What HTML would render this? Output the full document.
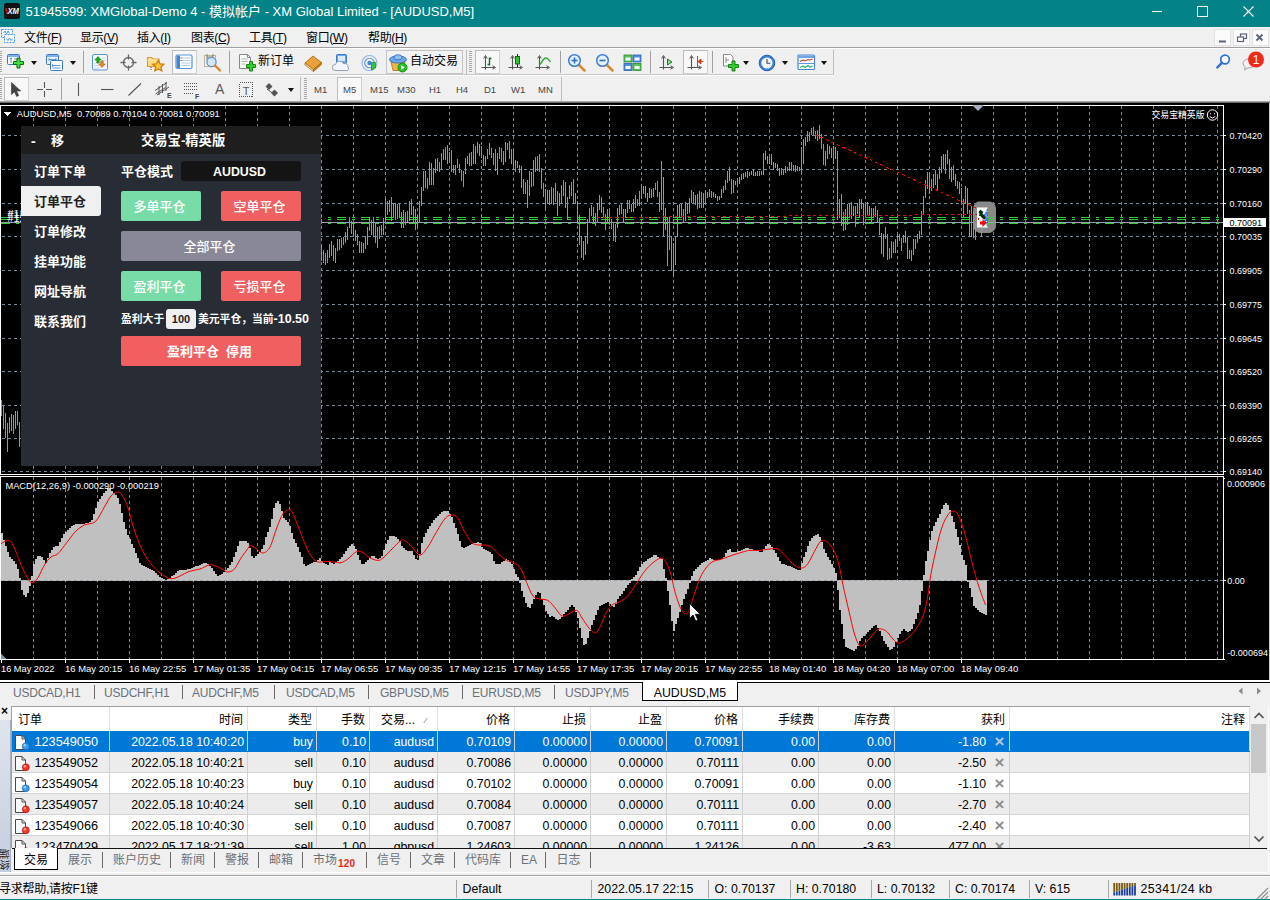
<!DOCTYPE html>
<html lang="zh"><head><meta charset="utf-8"><title>MT4</title>
<style>
html,body{margin:0;padding:0;background:#f0f0f0;overflow:hidden}
#app{position:relative;width:1270px;height:900px;overflow:hidden;background:#f0f0f0;font-family:"Liberation Sans","Noto Sans CJK SC",sans-serif;font-size:12px;color:#000}
#app *{box-sizing:border-box}
#title{position:absolute;left:0;top:0;width:1270px;height:27px;background:#038387}
.ttext{position:absolute;left:25.5px;top:3px;line-height:17px;font-size:13px;color:#fff;white-space:pre}
#menu{position:absolute;left:0;top:0;width:1270px;height:0}
.mi{position:absolute;top:29px;line-height:18px;font-size:12px;white-space:nowrap;letter-spacing:-.35px}
.mi u{text-decoration:underline;text-underline-offset:1px}
.mdib{position:absolute;top:29px;width:17px;height:17px;background:#fbfbfb;border:1px solid #e2e2e2}
.hl{position:absolute;left:0;width:1270px;height:1px}
#tb1,#tb2{position:absolute;left:0;top:0;width:1270px;height:0}
.grip{position:absolute;width:3px;height:21px;background:repeating-linear-gradient(to bottom,#a8a8a8 0 1px,transparent 1px 2px)}
.sep{position:absolute;width:1px;height:22px;background:#a0a0a0}
.dd{position:absolute;width:0;height:0;border-left:3.5px solid transparent;border-right:3.5px solid transparent;border-top:4px solid #111}
.pressed{position:absolute;background:#f8f8f8;border:1px solid #d0d0d0;border-top-color:#bdbdbd;border-left-color:#bdbdbd}
.atb{position:absolute;border:1px solid #c4c4c4;background:#f2f2f2}
.tbt{position:absolute;line-height:17px;font-size:12px;white-space:nowrap}
.per{position:absolute;font-size:9.5px;line-height:14px;color:#444;white-space:nowrap}
/* panel */
#panel{position:absolute;left:21px;top:126px;width:300px;height:340px;background:#282c34;color:#fff;font-weight:bold;font-size:13px}
.phead{position:absolute;left:0;top:0;width:300px;height:28px;background:#1e1e1e}
.phead span{position:absolute;line-height:17px;white-space:nowrap}
.pm{position:absolute;left:13px;line-height:20px;white-space:nowrap;font-size:13px}
.pm.on{color:#222}
.psel{position:absolute;left:0;width:80px;height:30px;background:#f0f0f0;border-radius:0 3px 3px 0}
.psym{position:absolute;text-indent:-3px;left:160px;top:35px;width:120px;height:20px;background:#141414;border-radius:3px;text-align:center;line-height:22px;font-size:12.4px}
.pb{position:absolute;text-indent:-3px;height:30px;border-radius:2px;text-align:center;line-height:31px;font-weight:500;font-size:13px;white-space:nowrap}
.pb.g{background:#78dca8}.pb.r{background:#f06060}.pb.v{background:#888898}
.ps{position:absolute;line-height:18px;font-size:10.8px;white-space:nowrap}
.ps b{font-size:12.5px}
.pin{position:absolute;left:145px;top:183px;width:30px;height:20px;background:#f0f0f0;border-radius:3px;color:#222;text-align:center;line-height:20px;font-size:11px}
/* chart tabs */
#ctabs{position:absolute;left:0;top:680px;width:1270px;height:27px;background:#f0f0f0;border-top:2px solid #fff}
#ctabs:before{content:"";position:absolute;left:0;top:0;width:1270px;height:1px;background:#000}
.ct{position:absolute;top:3px;line-height:17px;color:#6a7078;font-size:12px;white-space:nowrap;letter-spacing:-.22px}
.cs{position:absolute;top:3px;width:1px;height:14px;background:#6a6a6a}
.cact{position:absolute;left:642px;top:0;width:96px;height:19px;background:#fff;border:1px solid #000;border-top:none;text-align:center;line-height:23px;font-size:12.3px}
/* terminal */
#term{position:absolute;left:0;top:706px;width:1270px;height:169px;background:#f0f0f0}
#term:after{content:"";position:absolute;left:0;top:166px;width:1269px;height:1px;background:#fcfcfc}
#term:before{content:"";position:absolute;left:1268px;top:0;width:1px;height:167px;background:#fcfcfc}
.tstrip{position:absolute;left:0;top:14px;width:11px;height:152px;background:linear-gradient(#e0e4ee,#c4cde0);border-right:1px solid #a8b0c0}
.tx{position:absolute;left:1px;top:-16px;font-size:12px;font-weight:bold;line-height:14px}
.vt{position:absolute;left:0;top:124px;font-size:10.5px;line-height:11px;width:11px;height:26px;writing-mode:vertical-rl;transform:rotate(180deg);color:#222;letter-spacing:0}
#tbl{position:absolute;left:11px;top:0;width:1239px;height:142px;background:#fff;overflow:hidden;border-left:1px solid #a0a0a0;border-top:1px solid #a0a0a0}
.tr{position:absolute;left:0;width:1238px;height:21px;background:#fff;border-bottom:1px solid #d4d4d4}
.tr.th{top:0;height:24px;border-bottom:none}
.tr.alt{background:#ececec}
.tr.sel{background:#0078d7;color:#fff;border-bottom-color:#0078d7}
.c{position:absolute;top:0;height:100%;text-align:right;padding-right:3px;line-height:23px;font-size:12.3px;white-space:nowrap;border-right:1px solid #d0d0d0}
.th .c{line-height:26px;font-size:12px;border-right-color:#e0e0e0;padding-right:4px}
.di{position:absolute;left:2px;top:3px}
.cx{position:absolute;right:4.5px;top:-1px;color:#8c8c8c;font-size:17px;font-weight:bold}
.sel .cx{color:#b8c8d8}
.sb{position:absolute;left:1250px;top:1px;width:17px;height:141px;background:#f0f0f0}
.thumb{position:absolute;left:1px;top:17px;width:15px;height:49px;background:#c8c8c8}
.tline{position:absolute;left:12px;top:142px;width:1255px;height:1px;background:#111}
.btabs{position:absolute;left:0;top:142px;width:1270px;height:26px}
.bact{position:absolute;left:14px;top:0;width:44px;height:22px;background:#fff;border:1px solid #000;border-top:none;text-align:center;line-height:24px;font-size:12px}
.bt{position:absolute;top:4px;margin-left:1px;line-height:17px;color:#6a7078;font-size:12px;white-space:nowrap}
.bs{position:absolute;top:4px;width:1px;height:16px;background:#6a6a6a}
/* status */
#status{position:absolute;left:0;top:875px;width:1270px;height:25px;background:#f0f0f0;border-top:1px solid #a0a0a0;border-bottom:1px solid #038387}
#status:before{content:"";position:absolute;left:0;top:0;width:1270px;height:1px;background:#fff}
.st{position:absolute;top:5px;line-height:17px;font-size:12.3px;white-space:nowrap}
.ss{position:absolute;top:4px;width:1px;height:18px;background:#a8a8a8}

</style></head><body>
<div id="app">
<div id="title">
<svg style="position:absolute;left:4px;top:3px" width="16" height="16" viewBox="0 0 16 16" ><rect x="0" y="0" width="16" height="16" rx="2.5" fill="#111"/><path d="M1.8 5.2l1.6 5.6" stroke="#e01010" stroke-width="1.5"/><text x="9.2" y="11.2" font-family="Liberation Sans,sans-serif" font-size="8.6" font-weight="bold" font-style="italic" fill="#fff" text-anchor="middle" textLength="11.5" lengthAdjust="spacingAndGlyphs">XM</text></svg>
<span class="ttext">51945599: XMGlobal-Demo 4 - 模拟帐户 - XM Global Limited - [AUDUSD,M5]</span>
<svg style="position:absolute;left:1140px;top:0px" width="130" height="27" viewBox="0 0 130 27" ><g stroke="#fff" stroke-width="1" fill="none" shape-rendering="crispEdges"><path d="M12 11.5H22"/><rect x="57.5" y="6.5" width="10" height="10"/></g><path d="M103.5 6.5l10 10M113.5 6.5l-10 10" stroke="#fff" stroke-width="1.1"/></svg>
</div>
<div id="menu">
<svg style="position:absolute;left:1px;top:29px" width="15" height="14" viewBox="0 0 15 14" ><g fill="#fff" stroke="#3f97ee" stroke-width="1" stroke-dasharray="2 1"><rect x="0.500" y="0.500" width="11" height="8"/><rect x="3.500" y="5.500" width="10" height="8"/></g><path d="M2.500 4l1.500-2 1.500 3 1.500-3 1.500 2.500M5.500 9.500l1.500 2 1.500-2.500 1.500 2.500 1.500-2" fill="none" stroke="#3f8fe0" stroke-width=".9"/></svg>
<span class="mi" style="left:24px;width:37px">文件(<u>F</u>)</span>
<span class="mi" style="left:80px;width:39px">显示(<u>V</u>)</span>
<span class="mi" style="left:137px;width:37px">插入(<u>I</u>)</span>
<span class="mi" style="left:191px;width:41px">图表(<u>C</u>)</span>
<span class="mi" style="left:249px;width:40px">工具(<u>T</u>)</span>
<span class="mi" style="left:306px;width:45px">窗口(<u>W</u>)</span>
<span class="mi" style="left:368px;width:41px">帮助(<u>H</u>)</span>
<div class="mdib" style="left:1214px"></div>
<div class="mdib" style="left:1233px"></div>
<div class="mdib" style="left:1252px"></div>
<svg style="position:absolute;left:1214px;top:29px" width="56" height="17" viewBox="0 0 56 17" ><g stroke="#5a6478" fill="none"><path d="M5 12.5h7" stroke-width="2"/><g stroke-width="1.2"><rect x="26.5" y="5" width="6" height="4.5"/><rect x="23.5" y="8" width="6" height="4.5" fill="#fbfbfb"/></g><path d="M42.5 5.5l6 6M48.5 5.5l-6 6" stroke-width="1.9"/></g></svg>
</div>
<div class="hl" style="top:47px;background:#a0a0a0"></div><div class="hl" style="top:48px;background:#fff"></div>
<div id="tb1">
<div class="grip" style="left:-1px;top:51px"></div>
<svg style="position:absolute;left:6px;top:53px" width="20" height="19" viewBox="0 0 20 19" ><rect x="1.5" y="1.5" width="12" height="10" rx="1" fill="#fff" stroke="#3b78c4"/><rect x="2" y="2" width="11" height="2" fill="#7fb0e8"/><path d="M5 5v5M4 6l1-1 1 1M8 6h3M8 8.5h3" stroke="#3b78c4" stroke-width=".8" fill="none"/><path d="M7.5 8.5h3.5v-3.500h3v3.500h3.500v3h-3.500v3.500h-3v-3.500h-3.500z" fill="#3fe03f" stroke="#0a6a0a" stroke-width="1"/></svg>
<div class="dd" style="left:31px;top:61px"></div>
<svg style="position:absolute;left:45px;top:53px" width="20" height="19" viewBox="0 0 20 19" ><rect x="1.5" y="1.5" width="12" height="10" rx="1" fill="#eaf2fc" stroke="#3b78c4"/><rect x="2" y="2" width="11" height="2" fill="#7fb0e8"/><rect x="5.5" y="7.5" width="12" height="10" rx="1" fill="#fff" stroke="#3b78c4"/><path d="M4 6.5h7M7.5 12.5h8M7.5 15h8" stroke="#3b78c4" stroke-width=".8" fill="none"/><path d="M4 5v3M11 5v3M7.5 11v3" stroke="#3b78c4" stroke-width=".7"/></svg>
<div class="dd" style="left:70px;top:61px"></div>
<div class="sep" style="left:83px;top:51px"></div>
<svg style="position:absolute;left:91px;top:53px" width="19" height="19" viewBox="0 0 19 19" ><rect x="1.5" y="1.5" width="15" height="15.5" rx="1.5" fill="#f4f8fd" stroke="#5b93d6"/><path d="M3 10h4M3 12.5h5M3 15h6M11 5h4M11 7.500h4" stroke="#c5d3e4" stroke-width=".8"/><path d="M7 3.500l3.2 3.500h-2v3h-2.400v-3h-2z" fill="#17b317" stroke="#0c7a0c" stroke-width=".6"/><path d="M11 14.500l-3.2-3.500h2v-3h2.400v3h2z" fill="#e8892a" stroke="#a85a10" stroke-width=".6"/></svg>
<svg style="position:absolute;left:120px;top:54px" width="18" height="18" viewBox="0 0 18 18" ><g fill="none" stroke="#666" stroke-width="1.3"><circle cx="8.5" cy="8.5" r="5"/><path d="M8.5 0.500v5M8.5 11.500v5M0.5 8.500h5M11.5 8.500h5"/></g></svg>
<svg style="position:absolute;left:146px;top:53px" width="20" height="20" viewBox="0 0 20 20" ><path d="M1.5 4.500h4l1.5 1.500h6v7.500h-11.500z" fill="#fbdc80" stroke="#e0962a" stroke-width="1.1"/><path d="M1.5 7h11.5" stroke="#fbe9b6"/><path d="M12.3 7.200l1.7 3.6 3.9.5-2.9 2.7.8 3.9-3.5-2-3.5 2 .8-3.9-2.9-2.7 3.9-.5z" fill="#fac63c" stroke="#c87a0c" stroke-width="1.2"/><path d="M5 14v4" stroke="#555" stroke-dasharray="1 1"/></svg>
<div class="pressed" style="left:172px;top:50px;width:25px;height:24px"></div>
<svg style="position:absolute;left:175px;top:54px" width="19" height="16" viewBox="0 0 19 16" ><rect x="1" y="1" width="16" height="13.5" rx="1.5" fill="#fff" stroke="#5b93d6" stroke-width="1.2"/><rect x="1.6" y="1.6" width="3.4" height="12.3" fill="#3f86d8"/><path d="M6.5 4h9M6.5 6.500h9M6.5 9h9M6.5 11.500h9" stroke="#9cc0ea" stroke-width=".8"/><path d="M5.5 4h1.500M5.5 6.500h1.5" stroke="#e03030" stroke-width=".9"/></svg>
<svg style="position:absolute;left:203px;top:53px" width="20" height="20" viewBox="0 0 20 20" ><rect x="1.5" y="2.5" width="11" height="11" fill="#f6f1e6" stroke="#b9ad96" stroke-width=".9"/><path d="M4 1v6M10 1v6M4 4h6" stroke="#7a7466" stroke-width=".9" fill="none"/><circle cx="8.5" cy="9" r="4.6" fill="#cfe4fb" fill-opacity=".85" stroke="#5b93d6" stroke-width="1.3"/><path d="M12 12.500l5 5" stroke="#d98a2b" stroke-width="2.4" stroke-linecap="round"/></svg>
<div class="sep" style="left:229px;top:51px"></div>
<svg style="position:absolute;left:237px;top:53px" width="21" height="20" viewBox="0 0 21 20" ><path d="M2.5 1.500h8l3 3v11h-11z" fill="#fff" stroke="#7a7a7a" stroke-width=".9"/><path d="M10.5 1.500v3h3" fill="none" stroke="#7a7a7a" stroke-width=".9"/><path d="M4.5 6h6M4.5 8.500h6M4.5 11h4" stroke="#9a9a9a" stroke-width=".8"/><path d="M9.5 11.500h3v-3h3v3h3v3h-3v3.500h-3v-3.500h-3z" fill="#2fd02f" stroke="#0a7a0a" stroke-width=".9"/></svg>
<span class="tbt" style="left:258px;top:53px">新订单</span>
<svg style="position:absolute;left:303px;top:54px" width="21" height="18" viewBox="0 0 21 18" ><path d="M2 9l8-7 8.5 6.5-8 7z" fill="#e9a23b" stroke="#a86a12" stroke-width=".9"/><path d="M2 9l8.5 6.500v2l-8.5-6.500z" fill="#f7e2b8" stroke="#a86a12" stroke-width=".8"/><path d="M10.5 15.500l8-7v2l-8 7z" fill="#c9801e" stroke="#a86a12" stroke-width=".8"/></svg>
<svg style="position:absolute;left:332px;top:53px" width="20" height="20" viewBox="0 0 20 20" ><rect x="4.5" y="1.5" width="10" height="9" rx="1" fill="#6aa5e6" stroke="#2f6fbe" stroke-width=".9"/><rect x="6" y="3" width="7" height="5" fill="#d8e9fb"/><path d="M3 17.500a3 3 0 0 1 .5-6 4.2 4.2 0 0 1 8-.8 3.3 3.3 0 0 1 4.5 3.3 2.5 2.5 0 0 1-.5 3.500z" fill="#f3f6fa" stroke="#8a96a8" stroke-width=".9"/></svg>
<svg style="position:absolute;left:360px;top:53px" width="20" height="20" viewBox="0 0 20 20" ><g fill="none" stroke="#5b93d6"><circle cx="9.5" cy="10" r="7.5" stroke-width="1.1" stroke="#8db4e4"/><circle cx="9.5" cy="10" r="4.8" stroke-width="1.1"/><circle cx="9.5" cy="10" r="2.2" fill="#3f86d8" stroke="none"/></g><path d="M11.5 9.500v7.500l4-2.200v-5.300z" fill="#3cc23c" stroke="#168a16" stroke-width=".7"/></svg>
<div class="atb" style="left:386px;top:50px;width:77px;height:24px"></div>
<svg style="position:absolute;left:388px;top:53px" width="22" height="20" viewBox="0 0 22 20" ><path d="M3 8.500h14l-2 9h-10z" fill="#f0b44c" stroke="#b87a14" stroke-width=".9"/><ellipse cx="10" cy="6.5" rx="8.5" ry="3.6" fill="#6aa5e6" stroke="#2f6fbe" stroke-width=".9"/><ellipse cx="10" cy="4.3" rx="4" ry="2.6" fill="#8fc0f2" stroke="#2f6fbe" stroke-width=".8"/><circle cx="14.5" cy="14.5" r="4.5" fill="#25c225" stroke="#0d7c0d" stroke-width=".8"/><path d="M13.2 12.200v4.600l3.6-2.300z" fill="#fff"/></svg>
<span class="tbt" style="left:410px;top:53px">自动交易</span>
<div style="position:absolute;left:466px;top:50px;width:1px;height:24px;background:#bdbdbd"></div>
<div class="grip" style="left:469px;top:51px"></div>
<div class="pressed" style="left:475px;top:50px;width:25px;height:24px"></div>
<svg style="position:absolute;left:478px;top:53px" width="20" height="20" viewBox="0 0 20 20" ><path d="M7.5 3.5v13M3.5 14.5h13" fill="none" stroke="#555" stroke-width="1.1"/><path d="M5.7 5.5l1.8-3 1.8 3M14.5 12.7l3 1.8-3 1.8" fill="none" stroke="#555" stroke-width="1"/><path d="M11.5 4.5v8M9.5 11.500h2M11.500 5.500h2" stroke="#1a6a2a" stroke-width="1.400" fill="none"/></svg>
<svg style="position:absolute;left:505px;top:53px" width="20" height="20" viewBox="0 0 20 20" ><path d="M7.5 3.5v13M3.5 14.5h13" fill="none" stroke="#555" stroke-width="1.1"/><path d="M5.7 5.5l1.8-3 1.8 3M14.5 12.7l3 1.8-3 1.8" fill="none" stroke="#555" stroke-width="1"/><path d="M12.500 1v13" stroke="#222"/><rect x="10.500" y="3.500" width="4" height="7.500" fill="#2fc52f" stroke="#0d5a0d" stroke-width=".9"/></svg>
<svg style="position:absolute;left:532px;top:53px" width="20" height="20" viewBox="0 0 20 20" ><path d="M7.5 3.5v13M3.5 14.5h13" fill="none" stroke="#555" stroke-width="1.1"/><path d="M5.7 5.5l1.8-3 1.8 3M14.5 12.7l3 1.8-3 1.8" fill="none" stroke="#555" stroke-width="1"/><path d="M8 11.500c2-3 3.500-6 5.500-6.500s3 2 5 4" fill="none" stroke="#2aa52a" stroke-width="1.300"/></svg>
<div class="sep" style="left:560px;top:51px"></div>
<svg style="position:absolute;left:567px;top:53px" width="20" height="20" viewBox="0 0 20 20" ><path d="M11.5 11.500l6 6" stroke="#d98a2b" stroke-width="2.6" stroke-linecap="round"/><circle cx="7.5" cy="7.5" r="5.8" fill="#e4f0fc" stroke="#3f7fd0" stroke-width="1.5"/><g stroke="#2f6fbe" stroke-width="1.6"><path d="M4.5 7.500h6"/><path d="M7.5 4.500v6"/></g></svg>
<svg style="position:absolute;left:595px;top:53px" width="20" height="20" viewBox="0 0 20 20" ><path d="M11.5 11.500l6 6" stroke="#d98a2b" stroke-width="2.6" stroke-linecap="round"/><circle cx="7.5" cy="7.5" r="5.8" fill="#e4f0fc" stroke="#3f7fd0" stroke-width="1.5"/><g stroke="#2f6fbe" stroke-width="1.6"><path d="M4.5 7.500h6"/></g></svg>
<svg style="position:absolute;left:623px;top:54px" width="20" height="18" viewBox="0 0 20 18" ><g stroke-width=".8"><rect x="1" y="1" width="8" height="7" fill="#58c558" stroke="#2a8a2a"/><rect x="10" y="1" width="8" height="7" fill="#4f90e0" stroke="#2a5fae"/><rect x="1" y="9.5" width="8" height="7" fill="#4f90e0" stroke="#2a5fae"/><rect x="10" y="9.5" width="8" height="7" fill="#58c558" stroke="#2a8a2a"/></g><g fill="#fff"><rect x="2.5" y="3.5" width="5" height="3"/><rect x="11.5" y="3.5" width="5" height="3"/><rect x="2.5" y="12" width="5" height="3"/><rect x="11.5" y="12" width="5" height="3"/></g></svg>
<div class="sep" style="left:650px;top:51px"></div>
<svg style="position:absolute;left:656px;top:53px" width="20" height="20" viewBox="0 0 20 20" ><path d="M7.5 3.5v13M3.5 14.5h13" fill="none" stroke="#555" stroke-width="1.1"/><path d="M5.7 5.5l1.8-3 1.8 3M14.5 12.7l3 1.8-3 1.8" fill="none" stroke="#555" stroke-width="1"/><path d="M11.500 6v6l4.500-3z" fill="#8fe08f" stroke="#0d6a0d" stroke-width=".9"/></svg>
<div class="pressed" style="left:683px;top:50px;width:25px;height:24px"></div>
<svg style="position:absolute;left:684px;top:53px" width="22" height="20" viewBox="0 0 22 20" ><path d="M7.5 3.5v13M3.5 14.5h13" fill="none" stroke="#555" stroke-width="1.1"/><path d="M5.7 5.5l1.8-3 1.8 3M14.5 12.7l3 1.8-3 1.8" fill="none" stroke="#555" stroke-width="1"/><path d="M13.500 3v11" stroke="#3a6aa8"/><path d="M19.500 8.500h-5M17 6l-3 2.500 3 2.500z" stroke="#d03a1a" fill="#d03a1a" stroke-width=".9"/></svg>
<div class="sep" style="left:712px;top:51px"></div>
<svg style="position:absolute;left:721px;top:53px" width="22" height="20" viewBox="0 0 22 20" ><path d="M2.5 1.500h7l2.5 2.500v9h-9.500z" fill="#fff" stroke="#7a7a7a" stroke-width=".9"/><path d="M5 4v6M5 7h3" stroke="#7a7a7a" stroke-width=".9"/><path d="M7.5 11.500h3.500v-3.500h3v3.500h3.500v3h-3.500v3.500h-3v-3.500h-3.500z" fill="#2fd02f" stroke="#0a7a0a" stroke-width=".9"/></svg>
<div class="dd" style="left:743px;top:61px"></div>
<svg style="position:absolute;left:757px;top:53px" width="20" height="20" viewBox="0 0 20 20" ><circle cx="10" cy="10" r="7.8" fill="#3f7fd8" stroke="#1f55a8" stroke-width=".9"/><circle cx="10" cy="10" r="5.6" fill="#f4f7fb"/><path d="M10 6v4.300h3.2" fill="none" stroke="#444" stroke-width="1.1"/></svg>
<div class="dd" style="left:782px;top:61px"></div>
<svg style="position:absolute;left:797px;top:54px" width="20" height="18" viewBox="0 0 20 18" ><rect x="1" y="1" width="16.5" height="14.5" rx="1" fill="#fff" stroke="#4a88d6" stroke-width="1.2"/><rect x="1.5" y="1.5" width="15.5" height="2.5" fill="#6aa5e6"/><path d="M1.5 9.500h15.5" stroke="#4a88d6" stroke-width=".9"/><path d="M3 7.500l3-1.5 2 1 3-1.5 2 .5 2.5-1" fill="none" stroke="#c0392b" stroke-width="1.1"/><path d="M3 13.500l3-1.5 2 1.5 3-2 2 1.5 2.5-1" fill="none" stroke="#27ae60" stroke-width="1.1"/></svg>
<div class="dd" style="left:821px;top:61px"></div>
<div style="position:absolute;left:833px;top:50px;width:1px;height:24px;background:#bdbdbd"></div>
<div style="position:absolute;left:469px;top:74px;width:365px;height:1px;background:#c0c0c0"></div>
<svg style="position:absolute;left:1214px;top:53px" width="20" height="18" viewBox="0 0 20 18" ><circle cx="11" cy="6.5" r="4.3" fill="#fff" stroke="#2f6fd0" stroke-width="1.7"/><path d="M7.8 9.800l-4.5 4.7" stroke="#2f6fd0" stroke-width="2.4" stroke-linecap="round"/></svg>
<svg style="position:absolute;left:1240px;top:50px" width="30" height="24" viewBox="0 0 30 24" ><path d="M3 13.500a6 4.5 0 1 1 5 4.300l-3.5 2.2.8-3a6 4.5 0 0 1-2.3-3.500z" fill="#f2f2f2" stroke="#9a9a9a" stroke-width=".9"/><circle cx="16" cy="9.5" r="8" fill="#ee2a1c"/><text x="16" y="13.8" font-family="Liberation Sans,sans-serif" font-size="12" fill="#fff" text-anchor="middle">1</text></svg>
</div>
<div class="hl" style="top:74px;background:#c8c8c8;width:834px"></div><div class="hl" style="top:75px;background:#fff;width:834px"></div>
<div id="tb2">
<div class="grip" style="left:-1px;top:78px"></div>
<div class="pressed" style="left:4px;top:77px;width:25px;height:24px"></div>
<svg style="position:absolute;left:9px;top:81px" width="14" height="17" viewBox="0 0 14 17" ><path d="M2.5 1.500v12l3-2.8 2.2 4.8 2-1-2.2-4.600h4.200z" fill="#444" stroke="#333" stroke-width=".6"/></svg>
<svg style="position:absolute;left:36px;top:81px" width="18" height="18" viewBox="0 0 18 18" ><path d="M8.5 1v6M8.5 10v6M1 8.500h6M10 8.500h6" stroke="#555" stroke-width="1.1"/></svg>
<div class="sep" style="left:61px;top:78px"></div>
<svg style="position:absolute;left:72px;top:81px" width="14" height="18" viewBox="0 0 14 18" ><path d="M6.5 2v13" stroke="#555" stroke-width="1.1"/></svg>
<svg style="position:absolute;left:99px;top:81px" width="18" height="18" viewBox="0 0 18 18" ><path d="M2 8.500h12.5" stroke="#555" stroke-width="1.1"/></svg>
<svg style="position:absolute;left:126px;top:81px" width="18" height="18" viewBox="0 0 18 18" ><path d="M2.5 14.500l12.5-12" stroke="#555" stroke-width="1.1"/></svg>
<svg style="position:absolute;left:153px;top:80px" width="20" height="20" viewBox="0 0 20 20" ><g stroke="#555" stroke-width="1" fill="none"><path d="M2 10.500l12-8M4 15l12-8M2.5 14l10-6.5"/><path d="M6 6v9M9.5 4v9M13 2v9"/></g><text x="14" y="18" font-family="Liberation Sans,sans-serif" font-size="7" font-weight="bold" fill="#444">E</text></svg>
<svg style="position:absolute;left:182px;top:80px" width="20" height="20" viewBox="0 0 20 20" ><g stroke="#555" stroke-width="1" stroke-dasharray="1 1" fill="none"><path d="M2 3.500h13M2 6.500h13M2 9.500h13M2 13.500h10"/></g><text x="13" y="18.5" font-family="Liberation Sans,sans-serif" font-size="7" font-weight="bold" fill="#444">F</text></svg>
<span style="position:absolute;left:215px;top:80px;font:14px 'Liberation Sans',sans-serif;color:#5a5a5a;line-height:19px">A</span>
<svg style="position:absolute;left:238px;top:80px" width="18" height="20" viewBox="0 0 18 20" ><rect x="1.5" y="2.5" width="13" height="14" fill="none" stroke="#555" stroke-dasharray="1 1" shape-rendering="crispEdges"/><text x="8" y="14.5" font-family="Liberation Sans,sans-serif" font-size="11" fill="#5a5a5a" text-anchor="middle">T</text></svg>
<svg style="position:absolute;left:263px;top:80px" width="18" height="20" viewBox="0 0 18 20" ><path d="M2.5 6.500l3.5-3.5 3.5 3.5-3.5 3.500z" fill="#555"/><path d="M8 13l3.5-3.5 3.5 3.5-3.5 3.500z" fill="#555"/><path d="M4 9l8 6" stroke="#555"/></svg>
<div class="dd" style="left:288px;top:88px"></div>
<div style="position:absolute;left:300px;top:77px;width:1px;height:24px;background:#bdbdbd"></div>
<div class="grip" style="left:304px;top:78px"></div>
<div class="pressed" style="left:337px;top:77px;width:25px;height:24px"></div>
<span class="per" style="left:314px;top:83px">M1</span>
<span class="per" style="left:343px;top:83px">M5</span>
<span class="per" style="left:370px;top:83px">M15</span>
<span class="per" style="left:397px;top:83px">M30</span>
<span class="per" style="left:429px;top:83px">H1</span>
<span class="per" style="left:456px;top:83px">H4</span>
<span class="per" style="left:484px;top:83px">D1</span>
<span class="per" style="left:511px;top:83px">W1</span>
<span class="per" style="left:538px;top:83px">MN</span>
<div style="position:absolute;left:561px;top:77px;width:1px;height:24px;background:#bdbdbd"></div>
<div style="position:absolute;left:303px;top:101px;width:259px;height:1px;background:#c0c0c0"></div>
</div>
<div class="hl" style="top:101px;background:#a9a9a9"></div><div class="hl" style="top:102px;background:#696969"></div>
<svg id="chart" width="1270" height="577" viewBox="0 103 1270 577" shape-rendering="crispEdges" style="position:absolute;left:0;top:103px">
<rect x="0" y="103" width="1270" height="577" fill="#000"/>
<rect x="1269" y="103" width="1" height="577" fill="#c8c8c8"/>
<g stroke="#778899" stroke-width="1" stroke-dasharray="3 3" fill="none">
<path d="M33.5 106V474"/>
<path d="M33.5 477V659"/>
<path d="M65.5 106V474"/>
<path d="M65.5 477V659"/>
<path d="M97.5 106V474"/>
<path d="M97.5 477V659"/>
<path d="M129.5 106V474"/>
<path d="M129.5 477V659"/>
<path d="M161.5 106V474"/>
<path d="M161.5 477V659"/>
<path d="M193.5 106V474"/>
<path d="M193.5 477V659"/>
<path d="M225.5 106V474"/>
<path d="M225.5 477V659"/>
<path d="M257.5 106V474"/>
<path d="M257.5 477V659"/>
<path d="M289.5 106V474"/>
<path d="M289.5 477V659"/>
<path d="M321.5 106V474"/>
<path d="M321.5 477V659"/>
<path d="M353.5 106V474"/>
<path d="M353.5 477V659"/>
<path d="M385.5 106V474"/>
<path d="M385.5 477V659"/>
<path d="M417.5 106V474"/>
<path d="M417.5 477V659"/>
<path d="M449.5 106V474"/>
<path d="M449.5 477V659"/>
<path d="M481.5 106V474"/>
<path d="M481.5 477V659"/>
<path d="M513.5 106V474"/>
<path d="M513.5 477V659"/>
<path d="M545.5 106V474"/>
<path d="M545.5 477V659"/>
<path d="M577.5 106V474"/>
<path d="M577.5 477V659"/>
<path d="M609.5 106V474"/>
<path d="M609.5 477V659"/>
<path d="M641.5 106V474"/>
<path d="M641.5 477V659"/>
<path d="M673.5 106V474"/>
<path d="M673.5 477V659"/>
<path d="M705.5 106V474"/>
<path d="M705.5 477V659"/>
<path d="M737.5 106V474"/>
<path d="M737.5 477V659"/>
<path d="M769.5 106V474"/>
<path d="M769.5 477V659"/>
<path d="M801.5 106V474"/>
<path d="M801.5 477V659"/>
<path d="M833.5 106V474"/>
<path d="M833.5 477V659"/>
<path d="M865.5 106V474"/>
<path d="M865.5 477V659"/>
<path d="M897.5 106V474"/>
<path d="M897.5 477V659"/>
<path d="M929.5 106V474"/>
<path d="M929.5 477V659"/>
<path d="M961.5 106V474"/>
<path d="M961.5 477V659"/>
<path d="M993.5 106V474"/>
<path d="M993.5 477V659"/>
<path d="M1025.5 106V474"/>
<path d="M1025.5 477V659"/>
<path d="M1057.5 106V474"/>
<path d="M1057.5 477V659"/>
<path d="M1089.5 106V474"/>
<path d="M1089.5 477V659"/>
<path d="M1121.5 106V474"/>
<path d="M1121.5 477V659"/>
<path d="M1153.5 106V474"/>
<path d="M1153.5 477V659"/>
<path d="M1185.5 106V474"/>
<path d="M1185.5 477V659"/>
<path d="M1217.5 106V474"/>
<path d="M1217.5 477V659"/>
<path d="M2 135.5H1223"/>
<path d="M2 169.5H1223"/>
<path d="M2 203.5H1223"/>
<path d="M2 236.5H1223"/>
<path d="M2 270.5H1223"/>
<path d="M2 304.5H1223"/>
<path d="M2 338.5H1223"/>
<path d="M2 371.5H1223"/>
<path d="M2 405.5H1223"/>
<path d="M2 438.5H1223"/>
<path d="M2 471.5H1223"/>
<path d="M2 580.5H1223"/>
</g>
<g stroke="#fff" stroke-width="1" fill="none">
<path d="M0.5 105V474.5H1223.5V105.5H0"/>
<path d="M0 105.5H1224"/>
<path d="M0.5 476V660M0 476.5H1224M1223.5 476V660M0 659.5H1225"/>
<path d="M1224 135.5H1226"/>
<path d="M1224 169.5H1226"/>
<path d="M1224 203.5H1226"/>
<path d="M1224 236.5H1226"/>
<path d="M1224 270.5H1226"/>
<path d="M1224 304.5H1226"/>
<path d="M1224 338.5H1226"/>
<path d="M1224 371.5H1226"/>
<path d="M1224 405.5H1226"/>
<path d="M1224 438.5H1226"/>
<path d="M1224 471.5H1226"/>
<path d="M1224 580.5H1226M1224 478.5H1225"/>
<path d="M1.5 660V663"/>
<path d="M65.5 660V663"/>
<path d="M129.5 660V663"/>
<path d="M193.5 660V663"/>
<path d="M257.5 660V663"/>
<path d="M321.5 660V663"/>
<path d="M385.5 660V663"/>
<path d="M449.5 660V663"/>
<path d="M513.5 660V663"/>
<path d="M577.5 660V663"/>
<path d="M641.5 660V663"/>
<path d="M705.5 660V663"/>
<path d="M769.5 660V663"/>
<path d="M833.5 660V663"/>
<path d="M897.5 660V663"/>
<path d="M961.5 660V663"/>
</g>
<g stroke="#32cd32" stroke-width="1" stroke-dasharray="9 6 3 6" fill="none">
<path d="M1 217.5H1223"/><path d="M1 219.5H1223"/><path d="M1 223.5H1223"/>
</g>
<path d="M1 222.5H1223" stroke="#98a0ac" stroke-width="1" fill="none"/>
<g shape-rendering="auto">
<path d="M978 201.500h12c4 1 6 4 6 8v16c0 4-3 7-7 7.500h-9c-4-.5-7-4-7-8v-14c0-5 2-8.500 5-9.500z" fill="#8c8884"/>
<path d="M979 204h10c3 1 4.500 3 4.500 6v14c0 3-2 5-5 5.500h-8c-3-.5-5-3-5-6v-12c0-4 1.500-6.500 3.500-7.500z" fill="none" stroke="#7f8ea6" stroke-width="1"/>
</g>
<path d="M1.5 400V416M3.5 406V429M5.5 413V438M7.5 423V452M9.5 417V433M11.5 414V431M13.5 415V434M15.5 411V429M17.5 411V425M19.5 422V447M321.5 244V261M323.5 250V263M325.5 253V265M327.5 250V263M329.5 244V258M331.5 241V256M333.5 245V261M335.5 248V263M337.5 239V251M339.5 239V250M341.5 238V248M343.5 237V245M345.5 232V243M347.5 227V240M349.5 217V228M351.5 221V234M353.5 223V237M355.5 230V241M357.5 234V245M359.5 241V253M361.5 242V253M363.5 243V253M365.5 236V249M367.5 227V245M369.5 217V231M371.5 220V235M373.5 217V237M375.5 222V243M377.5 227V248M379.5 226V239M381.5 225V235M383.5 218V235M385.5 198V224M387.5 201V215M389.5 200V212M391.5 197V221M393.5 203V217M395.5 203V220M397.5 204V219M399.5 203V218M401.5 212V228M403.5 210V228M405.5 212V225M407.5 211V222M409.5 201V221M411.5 199V215M413.5 206V223M415.5 209V230M417.5 216V228M419.5 201V223M421.5 187V206M423.5 171V191M425.5 171V188M427.5 178V189M429.5 162V185M431.5 163V185M433.5 168V185M435.5 159V173M437.5 158V171M439.5 162V172M441.5 153V170M443.5 149V160M445.5 147V160M447.5 145V164M449.5 152V161M451.5 150V172M453.5 165V173M455.5 165V175M457.5 159V168M459.5 164V173M461.5 170V181M463.5 171V187M465.5 158V174M467.5 156V164M469.5 153V166M471.5 152V166M473.5 144V164M475.5 146V164M477.5 142V153M479.5 144V156M481.5 146V158M483.5 155V166M485.5 156V166M487.5 149V159M489.5 143V155M491.5 148V158M493.5 153V165M495.5 149V171M497.5 153V175M499.5 147V159M501.5 148V162M503.5 151V165M505.5 142V162M507.5 143V150M509.5 141V159M511.5 149V164M513.5 150V170M515.5 160V172M517.5 161V168M519.5 165V173M521.5 166V188M523.5 179V194M525.5 182V194M527.5 180V208M529.5 171V196M531.5 172V187M533.5 160V186M535.5 157V172M537.5 156V171M539.5 154V172M541.5 168V189M543.5 183V197M545.5 189V209M547.5 190V204M549.5 190V205M551.5 187V204M553.5 188V205M555.5 183V202M557.5 191V216M559.5 193V206M561.5 185V204M563.5 180V196M565.5 182V208M567.5 197V220M569.5 185V199M571.5 182V196M573.5 179V204M575.5 193V204M577.5 201V224M579.5 215V245M581.5 236V258M583.5 241V260M585.5 236V255M587.5 219V244M589.5 208V222M591.5 205V216M593.5 207V224M595.5 213V226M597.5 203V223M599.5 195V210M601.5 197V213M603.5 207V217M605.5 214V230M607.5 209V224M609.5 211V225M611.5 219V229M613.5 222V241M615.5 224V242M617.5 208V228M619.5 205V215M621.5 203V214M623.5 209V222M625.5 209V218M627.5 200V213M629.5 200V209M631.5 204V212M633.5 199V212M635.5 195V208M637.5 199V206M639.5 191V206M641.5 186V198M643.5 186V194M645.5 186V198M647.5 193V202M649.5 188V198M651.5 189V198M653.5 188V197M655.5 183V190M657.5 181V197M659.5 192V212M661.5 161V210M663.5 177V236M665.5 208V230M667.5 217V266M669.5 217V250M671.5 236V271M673.5 243V277M675.5 236V265M677.5 205V237M679.5 204V218M681.5 204V218M683.5 209V223M685.5 202V221M687.5 204V214M689.5 198V213M691.5 190V203M693.5 192V203M695.5 195V205M697.5 194V209M699.5 191V208M701.5 192V208M703.5 193V208M705.5 192V204M707.5 192V198M709.5 189V197M711.5 191V198M713.5 192V197M715.5 194V198M717.5 196V201M719.5 196V200M721.5 189V198M723.5 186V193M725.5 180V190M727.5 171V183M729.5 167V181M731.5 179V194M733.5 180V193M735.5 181V185M737.5 178V187M739.5 177V184M741.5 174V180M743.5 173V179M745.5 172V177M747.5 171V178M749.5 172V176M751.5 171V175M753.5 170V176M755.5 172V176M757.5 171V176M759.5 171V176M761.5 171V175M763.5 153V175M765.5 151V160M767.5 156V164M769.5 157V164M771.5 154V165M773.5 162V170M775.5 163V168M777.5 164V171M779.5 168V176M781.5 168V175M783.5 170V175M785.5 166V173M787.5 167V171M789.5 162V171M791.5 162V171M793.5 165V171M795.5 165V172M797.5 166V171M799.5 167V171M801.5 147V172M803.5 139V164M805.5 137V146M807.5 131V142M809.5 132V141M811.5 128V135M813.5 127V136M815.5 131V139M817.5 130V141M819.5 125V139M821.5 134V149M823.5 144V165M825.5 151V166M827.5 144V159M829.5 146V154M831.5 148V158M833.5 146V164M835.5 147V159M837.5 151V220M839.5 199V218M841.5 194V226M843.5 212V231M845.5 209V230M847.5 204V225M849.5 203V217M851.5 202V219M853.5 206V216M855.5 206V227M857.5 203V214M859.5 199V218M861.5 199V209M863.5 203V225M865.5 203V216M867.5 202V216M869.5 206V215M871.5 208V223M873.5 208V218M875.5 206V217M877.5 210V222M879.5 218V235M881.5 233V254M883.5 234V257M885.5 227V239M887.5 234V260M889.5 248V259M891.5 241V258M893.5 242V253M895.5 239V253M897.5 233V244M899.5 234V241M901.5 238V251M903.5 235V243M905.5 231V243M907.5 237V259M909.5 250V259M911.5 250V261M913.5 239V255M915.5 239V249M917.5 234V243M919.5 231V239M921.5 211V235M923.5 196V215M925.5 180V198M927.5 172V189M929.5 172V194M931.5 179V191M933.5 174V188M935.5 170V185M937.5 174V191M939.5 167V179M941.5 156V173M943.5 154V169M945.5 154V174M947.5 150V164M949.5 159V179M951.5 167V182M953.5 165V180M955.5 174V186M957.5 181V189M959.5 182V194M961.5 188V203M963.5 199V218M965.5 186V204M967.5 188V214M969.5 210V237M971.5 206V237M973.5 212V238M975.5 224V240M977.5 210V228M981.5 227V237" stroke="#00ff00" stroke-width="1" fill="none"/>
<g stroke="#ff0000" stroke-width="1" stroke-dasharray="3 3" fill="none">
<path d="M597 217.5L978 214.5"/>
<path d="M815 134.5L978 209"/>
</g>
<g shape-rendering="auto">
<rect x="977" y="207.500" width="11" height="20" fill="#fff"/>
<path d="M988 207.500L982.500 217L988 227.500Z" fill="#2f7fe0"/>
<path d="M984.500 212.500h1v1h-1zM985.500 214.500h1v1h-1zM986.500 211h1v1h-1zM986.500 216.500h1v1h-1zM984.500 219h1v1h-1zM986 221h1v1h-1zM986.500 223.500h1v1h-1z" fill="#fff"/>
<path d="M978.500 212l2-2.500 1.500 1.500 1.500 1-1 1.500 2 2 1 2.500-1 1.500-2.500-1.500-1.500-2h-1.500l.5-2z" fill="#0a2a0a"/>
<path d="M980 221.500h2.500v-2.500l4 4-4 4v-2.500h-2.500z" fill="#ff0000"/>
<rect x="978" y="218" width="1" height="2" fill="#ff2020"/>
</g>
<path d="M988 217.500H994M988 219.500H994M988 223.500H994" stroke="#32cd32" stroke-width="1" fill="none"/>
<path d="M988 222.500H996" stroke="#98a0ac" stroke-width="1" fill="none"/>
<path d="M1 533H3V581H1ZM3 540H5V581H3ZM5 546H7V581H5ZM7 552H9V581H7ZM9 557H11V581H9ZM11 559H13V581H11ZM13 561H15V581H13ZM15 564H17V581H15ZM17 569H19V581H17ZM19 578H21V581H19ZM21 580H23V590H21ZM23 580H25V595H23ZM25 580H27V597H25ZM27 580H29V593H27ZM29 580H31V586H29ZM31 576H33V581H31ZM33 564H35V581H33ZM35 559H37V581H35ZM37 556H39V581H37ZM39 556H41V581H39ZM41 557H43V581H41ZM43 560H45V581H43ZM45 563H47V581H45ZM47 558H49V581H47ZM49 553H51V581H49ZM51 550H53V581H51ZM53 547H55V581H53ZM55 546H57V581H55ZM57 546H59V581H57ZM59 542H61V581H59ZM61 538H63V581H61ZM63 534H65V581H63ZM65 532H67V581H65ZM67 530H69V581H67ZM69 528H71V581H69ZM71 526H73V581H71ZM73 525H75V581H73ZM75 524H77V581H75ZM77 524H79V581H77ZM79 524H81V581H79ZM81 524H83V581H81ZM83 524H85V581H83ZM85 523H87V581H85ZM87 523H89V581H87ZM89 522H91V581H89ZM91 520H93V581H91ZM93 514H95V581H93ZM95 508H97V581H95ZM97 502H99V581H97ZM99 499H101V581H99ZM101 496H103V581H101ZM103 493H105V581H103ZM105 491H107V581H105ZM107 488H109V581H107ZM109 488H111V581H109ZM111 491H113V581H111ZM113 493H115V581H113ZM115 495H117V581H115ZM117 498H119V581H117ZM119 504H121V581H119ZM121 513H123V581H121ZM123 522H125V581H123ZM125 529H127V581H125ZM127 535H129V581H127ZM129 539H131V581H129ZM131 544H133V581H131ZM133 548H135V581H133ZM135 553H137V581H135ZM137 558H139V581H137ZM139 563H141V581H139ZM141 565H143V581H141ZM143 566H145V581H143ZM145 567H147V581H145ZM147 568H149V581H147ZM149 569H151V581H149ZM151 570H153V581H151ZM153 571H155V581H153ZM155 573H157V581H155ZM157 575H159V581H157ZM159 577H161V581H159ZM161 578H163V581H161ZM163 579H165V581H163ZM165 580H167V581H165ZM167 579H169V581H167ZM169 578H171V581H169ZM171 576H173V581H171ZM173 575H175V581H173ZM175 573H177V581H175ZM177 571H179V581H177ZM179 570H181V581H179ZM181 570H183V581H181ZM183 570H185V581H183ZM185 570H187V581H185ZM187 569H189V581H187ZM189 569H191V581H189ZM191 568H193V581H191ZM193 567H195V581H193ZM195 566H197V581H195ZM197 566H199V581H197ZM199 565H201V581H199ZM201 564H203V581H201ZM203 563H205V581H203ZM205 563H207V581H205ZM207 564H209V581H207ZM209 566H211V581H209ZM211 568H213V581H211ZM213 571H215V581H213ZM215 574H217V581H215ZM217 576H219V581H217ZM219 575H221V581H219ZM221 574H223V581H221ZM223 572H225V581H223ZM225 570H227V581H225ZM227 568H229V581H227ZM229 565H231V581H229ZM231 562H233V581H231ZM233 557H235V581H233ZM235 552H237V581H235ZM237 546H239V581H237ZM239 541H241V581H239ZM241 541H243V581H241ZM243 541H245V581H243ZM245 541H247V581H245ZM247 543H249V581H247ZM249 548H251V581H249ZM251 556H253V581H251ZM253 558H255V581H253ZM255 556H257V581H255ZM257 554H259V581H257ZM259 552H261V581H259ZM261 549H263V581H261ZM263 545H265V581H263ZM265 537H267V581H265ZM267 532H269V581H267ZM269 527H271V581H269ZM271 519H273V581H271ZM273 508H275V581H273ZM275 503H277V581H275ZM277 501H279V581H277ZM279 504H281V581H279ZM281 511H283V581H281ZM283 518H285V581H283ZM285 520H287V581H285ZM287 522H289V581H287ZM289 526H291V581H289ZM291 533H293V581H291ZM293 539H295V581H293ZM295 543H297V581H295ZM297 547H299V581H297ZM299 552H301V581H299ZM301 557H303V581H301ZM303 564H305V581H303ZM305 566H307V581H305ZM307 565H309V581H307ZM309 564H311V581H309ZM311 563H313V581H311ZM313 562H315V581H313ZM315 562H317V581H315ZM317 560H319V581H317ZM319 558H321V581H319ZM321 561H323V581H321ZM323 563H325V581H323ZM325 564H327V581H325ZM327 565H329V581H327ZM329 562H331V581H329ZM331 563H333V581H331ZM333 564H335V581H333ZM335 562H337V581H335ZM337 561H339V581H337ZM339 559H341V581H339ZM341 557H343V581H341ZM343 554H345V581H343ZM345 551H347V581H345ZM347 548H349V581H347ZM349 546H351V581H349ZM351 544H353V581H351ZM353 546H355V581H353ZM355 549H357V581H355ZM357 555H359V581H357ZM359 560H361V581H359ZM361 564H363V581H361ZM363 564H365V581H363ZM365 562H367V581H365ZM367 560H369V581H367ZM369 558H371V581H369ZM371 556H373V581H371ZM373 556H375V581H373ZM375 558H377V581H375ZM377 559H379V581H377ZM379 558H381V581H379ZM381 556H383V581H381ZM383 550H385V581H383ZM385 544H387V581H385ZM387 540H389V581H387ZM389 536H391V581H389ZM391 536H393V581H391ZM393 536H395V581H393ZM395 537H397V581H395ZM397 539H399V581H397ZM399 541H401V581H399ZM401 546H403V581H401ZM403 548H405V581H403ZM405 550H407V581H405ZM407 551H409V581H407ZM409 551H411V581H409ZM411 551H413V581H411ZM413 555H415V581H413ZM415 559H417V581H415ZM417 560H419V581H417ZM419 554H421V581H419ZM421 543H423V581H421ZM423 537H425V581H423ZM425 533H427V581H425ZM427 529H429V581H427ZM429 526H431V581H429ZM431 523H433V581H431ZM433 520H435V581H433ZM435 518H437V581H435ZM437 516H439V581H437ZM439 514H441V581H439ZM441 512H443V581H441ZM443 511H445V581H443ZM445 511H447V581H445ZM447 511H449V581H447ZM449 514H451V581H449ZM451 517H453V581H451ZM453 523H455V581H453ZM455 528H457V581H455ZM457 534H459V581H457ZM459 541H461V581H459ZM461 547H463V581H461ZM463 548H465V581H463ZM465 547H467V581H465ZM467 546H469V581H467ZM469 545H471V581H469ZM471 544H473V581H471ZM473 543H475V581H473ZM475 543H477V581H475ZM477 542H479V581H477ZM479 543H481V581H479ZM481 547H483V581H481ZM483 549H485V581H483ZM485 550H487V581H485ZM487 551H489V581H487ZM489 552H491V581H489ZM491 554H493V581H491ZM493 561H495V581H493ZM495 564H497V581H495ZM497 564H499V581H497ZM499 564H501V581H499ZM501 562H503V581H501ZM503 561H505V581H503ZM505 559H507V581H505ZM507 560H509V581H507ZM509 562H511V581H509ZM511 564H513V581H511ZM513 569H515V581H513ZM515 574H517V581H515ZM517 577H519V581H517ZM519 580H521V583H519ZM521 580H523V591H521ZM523 580H525V597H523ZM525 580H527V603H525ZM527 580H529V607H527ZM529 580H531V608H529ZM531 580H533V604H531ZM533 580H535V599H533ZM535 580H537V595H535ZM537 580H539V592H537ZM539 580H541V593H539ZM541 580H543V599H541ZM543 580H545V605H543ZM545 580H547V611H545ZM547 580H549V614H547ZM549 580H551V617H549ZM551 580H553V616H551ZM553 580H555V617H553ZM555 580H557V619H555ZM557 580H559V620H557ZM559 580H561V619H559ZM561 580H563V617H561ZM563 580H565V614H563ZM565 580H567V612H565ZM567 580H569V610H567ZM569 580H571V607H569ZM571 580H573V605H571ZM573 580H575V607H573ZM575 580H577V612H575ZM577 580H579V618H577ZM579 580H581V628H579ZM581 580H583V638H581ZM583 580H585V645H583ZM585 580H587V644H585ZM587 580H589V638H587ZM589 580H591V631H589ZM591 580H593V625H591ZM593 580H595V620H593ZM595 580H597V615H595ZM597 580H599V610H597ZM599 580H601V606H599ZM601 580H603V605H601ZM603 580H605V604H603ZM605 580H607V603H605ZM607 580H609V602H607ZM609 580H611V604H609ZM611 580H613V606H611ZM613 580H615V607H613ZM615 580H617V604H615ZM617 580H619V599H617ZM619 580H621V596H619ZM621 580H623V594H621ZM623 580H625V591H623ZM625 580H627V588H625ZM627 580H629V585H627ZM629 580H631V583H629ZM631 579H633V581H631ZM633 577H635V581H633ZM635 575H637V581H635ZM637 571H639V581H637ZM639 567H641V581H639ZM641 564H643V581H641ZM643 562H645V581H643ZM645 561H647V581H645ZM647 559H649V581H647ZM649 558H651V581H649ZM651 557H653V581H651ZM653 555H655V581H653ZM655 555H657V581H655ZM657 557H659V581H657ZM659 558H661V581H659ZM661 559H663V581H661ZM663 569H665V581H663ZM665 578H667V581H665ZM667 580H669V591H667ZM669 580H671V605H669ZM671 580H673V621H671ZM673 580H675V631H673ZM675 580H677V624H675ZM677 580H679V618H677ZM679 580H681V612H679ZM681 580H683V605H681ZM683 580H685V599H683ZM685 580H687V594H685ZM687 580H689V589H687ZM689 580H691V583H689ZM691 576H693V581H691ZM693 571H695V581H693ZM695 569H697V581H695ZM697 567H699V581H697ZM699 565H701V581H699ZM701 563H703V581H701ZM703 562H705V581H703ZM705 561H707V581H705ZM707 560H709V581H707ZM709 558H711V581H709ZM711 559H713V581H711ZM713 560H715V581H713ZM715 560H717V581H715ZM717 560H719V581H717ZM719 560H721V581H719ZM721 559H723V581H721ZM723 557H725V581H723ZM725 553H727V581H725ZM727 550H729V581H727ZM729 549H731V581H729ZM731 552H733V581H731ZM733 552H735V581H733ZM735 552H737V581H735ZM737 551H739V581H737ZM739 551H741V581H739ZM741 550H743V581H741ZM743 549H745V581H743ZM745 548H747V581H745ZM747 548H749V581H747ZM749 549H751V581H749ZM751 549H753V581H751ZM753 550H755V581H753ZM755 551H757V581H755ZM757 551H759V581H757ZM759 552H761V581H759ZM761 552H763V581H761ZM763 549H765V581H763ZM765 546H767V581H765ZM767 544H769V581H767ZM769 545H771V581H769ZM771 547H773V581H771ZM773 550H775V581H773ZM775 553H777V581H775ZM777 557H779V581H777ZM779 561H781V581H779ZM781 564H783V581H781ZM783 564H785V581H783ZM785 565H787V581H785ZM787 566H789V581H787ZM789 566H791V581H789ZM791 567H793V581H791ZM793 568H795V581H793ZM795 569H797V581H795ZM797 570H799V581H797ZM799 570H801V581H799ZM801 563H803V581H801ZM803 557H805V581H803ZM805 552H807V581H805ZM807 546H809V581H807ZM809 541H811V581H809ZM811 538H813V581H811ZM813 536H815V581H813ZM815 535H817V581H815ZM817 534H819V581H817ZM819 537H821V581H819ZM821 542H823V581H821ZM823 549H825V581H823ZM825 553H827V581H825ZM827 557H829V581H827ZM829 560H831V581H829ZM831 564H833V581H831ZM833 568H835V581H833ZM835 573H837V581H835ZM837 580H839V590H837ZM839 580H841V610H839ZM841 580H843V624H841ZM843 580H845V639H843ZM845 580H847V647H845ZM847 580H849V648H847ZM849 580H851V649H849ZM851 580H853V650H851ZM853 580H855V651H853ZM855 580H857V649H855ZM857 580H859V646H857ZM859 580H861V641H859ZM861 580H863V638H861ZM863 580H865V636H863ZM865 580H867V634H865ZM867 580H869V632H867ZM869 580H871V630H869ZM871 580H873V628H871ZM873 580H875V626H873ZM875 580H877V625H875ZM877 580H879V628H877ZM879 580H881V631H879ZM881 580H883V636H881ZM883 580H885V641H883ZM885 580H887V644H885ZM887 580H889V647H887ZM889 580H891V650H889ZM891 580H893V649H891ZM893 580H895V647H893ZM895 580H897V642H895ZM897 580H899V638H897ZM899 580H901V634H899ZM901 580H903V631H901ZM903 580H905V629H903ZM905 580H907V631H905ZM907 580H909V632H907ZM909 580H911V631H909ZM911 580H913V629H911ZM913 580H915V624H913ZM915 580H917V619H915ZM917 580H919V613H917ZM919 580H921V605H919ZM921 580H923V591H921ZM923 575H925V581H923ZM925 561H927V581H925ZM927 551H929V581H927ZM929 540H931V581H929ZM931 531H933V581H931ZM933 526H935V581H933ZM935 522H937V581H935ZM937 518H939V581H937ZM939 514H941V581H939ZM941 509H943V581H941ZM943 505H945V581H943ZM945 503H947V581H945ZM947 505H949V581H947ZM949 510H951V581H949ZM951 516H953V581H951ZM953 522H955V581H953ZM955 529H957V581H955ZM957 537H959V581H957ZM959 545H961V581H959ZM961 555H963V581H961ZM963 560H965V581H963ZM965 565H967V581H965ZM967 580H969V582H967ZM969 580H971V588H969ZM971 580H973V597H971ZM973 580H975V606H973ZM975 580H977V608H975ZM977 580H979V610H977ZM979 580H981V612H979ZM981 580H983V613H981ZM983 580H985V614H983ZM985 580H987V615H985Z" fill="#c0c0c0"/>
<path d="M2 580.5H986" stroke="#9aa3ad" stroke-width="1" stroke-dasharray="3 3" fill="none"/>
<path d="M1.0 543.8C2.1 543.2 5.8 540.2 7.8 540.4C9.8 540.6 10.6 540.6 13.0 545.0C15.4 549.4 19.3 561.1 22.0 567.0C24.7 572.9 27.2 577.8 29.0 580.4C30.8 583.0 31.5 583.1 33.0 582.7C34.5 582.3 35.9 581.0 37.8 578.0C39.7 575.0 42.2 568.5 44.4 565.0C46.6 561.5 48.8 558.9 51.0 557.0C53.2 555.1 55.2 556.2 57.8 553.8C60.4 551.4 63.8 546.4 66.7 542.7C69.7 539.0 72.5 534.5 75.5 531.5C78.5 528.5 81.1 526.7 84.4 525.0C87.7 523.3 92.2 524.5 95.5 521.5C98.8 518.5 101.8 511.2 104.4 507.0C107.0 502.8 108.8 498.5 111.0 496.0C113.2 493.5 116.0 492.2 117.8 492.0C119.6 491.8 120.3 492.5 122.0 495.0C123.7 497.5 126.0 501.8 127.8 507.0C129.6 512.2 131.0 519.7 133.0 526.0C135.0 532.3 137.7 539.7 140.0 545.0C142.3 550.3 144.1 554.0 146.7 558.0C149.3 562.0 152.6 566.0 155.5 569.0C158.4 572.0 161.7 574.4 164.4 576.0C167.2 577.6 169.4 578.7 172.0 578.7C174.6 578.7 177.2 577.2 180.0 576.0C182.8 574.8 185.7 572.7 189.0 571.5C192.3 570.3 196.7 570.1 200.0 569.0C203.3 567.9 206.6 565.6 209.0 565.0C211.4 564.4 212.2 564.8 214.4 565.5C216.6 566.2 219.8 567.9 222.0 569.0C224.2 570.1 225.7 572.0 227.8 572.0C229.9 572.0 232.2 571.3 234.4 569.0C236.6 566.7 238.6 561.7 241.0 558.0C243.4 554.3 247.5 549.2 249.0 547.0C250.5 544.8 248.7 544.7 250.0 545.0C251.3 545.3 254.5 547.7 256.7 549.0C258.9 550.3 260.8 553.3 263.0 553.0C265.2 552.7 267.7 551.2 270.0 547.0C272.3 542.8 274.5 533.5 276.7 528.0C278.9 522.5 280.8 516.8 283.0 513.8C285.2 510.8 288.1 509.3 290.0 509.8C291.9 510.3 292.6 513.0 294.4 517.0C296.2 521.0 298.6 527.8 301.0 533.8C303.4 539.8 306.4 548.1 309.0 552.7C311.6 557.3 313.9 560.0 316.7 561.5C319.4 563.0 322.6 561.4 325.5 561.5C328.4 561.6 331.8 561.8 334.4 562.0C337.0 562.2 338.8 563.2 341.0 562.7C343.2 562.2 345.2 560.9 347.8 559.0C350.4 557.1 354.2 552.5 356.7 551.5C359.2 550.5 360.8 551.7 363.0 552.7C365.2 553.8 367.5 556.5 370.0 557.8C372.5 559.1 375.6 560.4 377.8 560.4C380.0 560.4 380.6 559.9 383.0 558.0C385.4 556.1 389.0 551.9 392.0 549.0C395.0 546.1 398.8 541.7 401.0 540.4C403.2 539.1 403.7 539.9 405.5 541.0C407.3 542.1 409.6 544.7 412.0 547.0C414.4 549.3 417.4 555.0 420.0 555.0C422.6 555.0 425.0 550.9 427.8 547.0C430.6 543.1 433.8 536.3 436.7 531.5C439.6 526.7 442.9 520.8 445.5 518.0C448.1 515.2 449.9 515.0 452.0 515.0C454.1 515.0 455.7 515.2 457.8 518.0C459.9 520.8 462.0 527.4 464.4 531.5C466.8 535.6 469.6 540.5 472.0 542.7C474.4 545.0 476.8 544.6 479.0 545.0C481.2 545.4 483.3 544.6 485.5 545.0C487.7 545.4 489.6 545.8 492.0 547.5C494.4 549.2 497.6 553.4 500.0 555.5C502.4 557.6 504.3 559.1 506.7 560.4C509.1 561.6 512.0 561.6 514.4 563.0C516.8 564.4 519.0 565.7 521.0 569.0C523.0 572.3 524.7 578.2 526.7 582.7C528.7 587.2 530.8 593.3 533.0 596.0C535.2 598.7 537.5 598.3 540.0 599.0C542.5 599.7 545.4 599.1 547.8 600.4C550.2 601.7 552.0 604.4 554.4 607.0C556.8 609.6 559.6 614.9 562.0 616.0C564.4 617.1 566.5 614.7 569.0 613.8C571.5 612.9 574.5 609.7 576.7 610.4C578.9 611.1 580.0 615.1 582.0 618.0C584.0 620.9 586.8 625.5 589.0 628.0C591.2 630.5 593.5 633.5 595.5 633.0C597.5 632.5 599.1 628.6 601.0 625.0C602.9 621.4 604.7 614.9 606.7 611.5C608.7 608.1 610.8 606.1 613.0 604.4C615.2 602.7 617.5 602.9 620.0 601.5C622.5 600.1 625.2 598.8 627.8 596.0C630.4 593.2 632.7 589.1 635.5 585.0C638.3 580.9 641.5 575.2 644.4 571.5C647.3 567.8 650.2 565.0 653.0 562.7C655.8 560.5 658.9 558.2 661.0 558.0C663.1 557.8 664.0 559.2 665.5 561.5C667.0 563.8 668.3 566.1 670.0 571.5C671.7 576.9 673.7 587.5 675.5 593.8C677.3 600.0 679.3 605.7 681.0 609.0C682.7 612.3 684.2 613.6 685.5 613.8C686.8 614.0 687.5 613.7 689.0 610.4C690.5 607.1 692.6 599.2 694.4 593.8C696.2 588.4 698.0 582.5 700.0 578.0C702.0 573.5 704.5 569.8 706.7 567.0C708.9 564.2 710.5 562.8 713.0 561.5C715.5 560.2 718.7 560.1 722.0 559.0C725.3 557.9 729.3 556.2 733.0 555.0C736.7 553.8 741.6 552.3 744.4 551.5C747.2 550.7 747.6 550.6 750.0 550.4C752.4 550.2 755.7 550.6 759.0 550.4C762.3 550.2 766.9 549.2 770.0 549.0C773.1 548.8 775.2 547.8 777.8 549.0C780.4 550.2 782.7 553.3 785.5 556.0C788.3 558.7 791.6 563.0 794.4 565.0C797.1 567.0 799.8 568.2 802.0 568.0C804.2 567.8 805.7 566.5 807.8 563.8C809.9 561.0 812.4 555.1 814.4 551.5C816.4 547.9 818.3 543.9 820.0 542.0C821.7 540.1 822.9 540.1 824.4 540.4C825.9 540.7 827.3 541.9 829.0 543.8C830.7 545.6 832.7 548.0 834.4 551.5C836.1 555.0 837.6 559.4 839.0 565.0C840.4 570.6 841.3 577.2 843.0 585.0C844.7 592.8 847.1 603.4 849.0 611.5C850.9 619.6 852.7 628.2 854.4 633.8C856.1 639.4 857.6 643.1 859.0 645.0C860.4 646.9 861.2 646.2 863.0 645.0C864.8 643.8 867.7 640.4 870.0 638.0C872.3 635.6 874.9 631.9 876.7 630.4C878.5 628.9 879.3 628.8 881.0 629.0C882.7 629.2 884.7 629.8 886.7 631.5C888.7 633.2 891.1 637.1 893.0 639.0C894.9 640.9 896.1 642.6 897.8 643.0C899.5 643.4 901.0 642.7 903.0 641.5C905.0 640.3 907.7 638.2 910.0 636.0C912.3 633.8 914.5 631.3 916.7 628.0C918.9 624.7 921.1 621.3 923.0 616.0C924.9 610.7 926.5 603.0 927.8 596.0C929.1 589.0 929.5 582.0 931.0 573.8C932.5 565.6 934.9 554.8 936.7 547.0C938.5 539.2 940.1 532.3 942.0 527.0C943.9 521.7 946.1 517.6 947.8 515.0C949.5 512.4 950.5 511.9 952.0 511.5C953.5 511.1 955.2 511.0 956.7 512.7C958.2 514.4 959.3 516.9 961.0 521.5C962.7 526.1 964.9 533.5 966.7 540.4C968.5 547.3 970.0 554.9 972.0 562.7C974.0 570.5 976.8 580.0 979.0 587.0C981.2 594.0 984.4 602.0 985.5 605.0" stroke="#ff0000" stroke-width="1" fill="none" shape-rendering="auto"/>
<g font-family="Liberation Sans, sans-serif" font-size="9" fill="#fff" shape-rendering="auto">
<text x="1229.5" y="138.9" font-size="9.4" textLength="32.5" lengthAdjust="spacingAndGlyphs">0.70420</text>
<text x="1229.5" y="172.9" font-size="9.4" textLength="32.5" lengthAdjust="spacingAndGlyphs">0.70290</text>
<text x="1229.5" y="206.9" font-size="9.4" textLength="32.5" lengthAdjust="spacingAndGlyphs">0.70160</text>
<text x="1229.5" y="239.9" font-size="9.4" textLength="32.5" lengthAdjust="spacingAndGlyphs">0.70035</text>
<text x="1229.5" y="273.9" font-size="9.4" textLength="32.5" lengthAdjust="spacingAndGlyphs">0.69905</text>
<text x="1229.5" y="307.9" font-size="9.4" textLength="32.5" lengthAdjust="spacingAndGlyphs">0.69775</text>
<text x="1229.5" y="341.9" font-size="9.4" textLength="32.5" lengthAdjust="spacingAndGlyphs">0.69645</text>
<text x="1229.5" y="374.9" font-size="9.4" textLength="32.5" lengthAdjust="spacingAndGlyphs">0.69520</text>
<text x="1229.5" y="408.9" font-size="9.4" textLength="32.5" lengthAdjust="spacingAndGlyphs">0.69390</text>
<text x="1229.5" y="441.9" font-size="9.4" textLength="32.5" lengthAdjust="spacingAndGlyphs">0.69265</text>
<text x="1229.5" y="474.9" font-size="9.4" textLength="32.5" lengthAdjust="spacingAndGlyphs">0.69140</text>
<text x="1227" y="487" font-size="9.4" textLength="38" lengthAdjust="spacingAndGlyphs">0.000906</text>
<text x="1227.3" y="584" font-size="9.4" textLength="17.4" lengthAdjust="spacingAndGlyphs">0.00</text>
<text x="1227.3" y="656" font-size="9.4" textLength="40.7" lengthAdjust="spacingAndGlyphs">-0.000694</text>
<rect x="1224" y="218" width="42" height="9" fill="#fff" shape-rendering="crispEdges"/>
<text x="1229.5" y="225.9" fill="#000" font-size="9.4" textLength="32.5" lengthAdjust="spacingAndGlyphs">0.70091</text>
<text x="1" y="672.2" font-size="9.6" textLength="53.4" lengthAdjust="spacingAndGlyphs">16 May 2022</text>
<text x="65" y="672.2" font-size="9.6" textLength="57.3" lengthAdjust="spacingAndGlyphs">16 May 20:15</text>
<text x="129" y="672.2" font-size="9.6" textLength="57.3" lengthAdjust="spacingAndGlyphs">16 May 22:55</text>
<text x="193" y="672.2" font-size="9.6" textLength="57.3" lengthAdjust="spacingAndGlyphs">17 May 01:35</text>
<text x="257" y="672.2" font-size="9.6" textLength="57.3" lengthAdjust="spacingAndGlyphs">17 May 04:15</text>
<text x="321" y="672.2" font-size="9.6" textLength="57.3" lengthAdjust="spacingAndGlyphs">17 May 06:55</text>
<text x="385" y="672.2" font-size="9.6" textLength="57.3" lengthAdjust="spacingAndGlyphs">17 May 09:35</text>
<text x="449" y="672.2" font-size="9.6" textLength="57.3" lengthAdjust="spacingAndGlyphs">17 May 12:15</text>
<text x="513" y="672.2" font-size="9.6" textLength="57.3" lengthAdjust="spacingAndGlyphs">17 May 14:55</text>
<text x="577" y="672.2" font-size="9.6" textLength="57.3" lengthAdjust="spacingAndGlyphs">17 May 17:35</text>
<text x="641" y="672.2" font-size="9.6" textLength="57.3" lengthAdjust="spacingAndGlyphs">17 May 20:15</text>
<text x="705" y="672.2" font-size="9.6" textLength="57.3" lengthAdjust="spacingAndGlyphs">17 May 22:55</text>
<text x="769" y="672.2" font-size="9.6" textLength="57.3" lengthAdjust="spacingAndGlyphs">18 May 01:40</text>
<text x="833" y="672.2" font-size="9.6" textLength="57.3" lengthAdjust="spacingAndGlyphs">18 May 04:20</text>
<text x="897" y="672.2" font-size="9.6" textLength="57.3" lengthAdjust="spacingAndGlyphs">18 May 07:00</text>
<text x="961" y="672.2" font-size="9.6" textLength="57.3" lengthAdjust="spacingAndGlyphs">18 May 09:40</text>
<text x="16.8" y="116.6" textLength="203" lengthAdjust="spacingAndGlyphs" xml:space="preserve">AUDUSD,M5  0.70089 0.70104 0.70081 0.70091</text>
<text x="5.4" y="489" textLength="153.5" lengthAdjust="spacingAndGlyphs">MACD(12,26,9) -0.000290 -0.000219</text>
<text x="7.5" y="215.5" font-size="9.5" textLength="18" lengthAdjust="spacingAndGlyphs">#12</text>
<text x="7.5" y="217.5" font-size="9.5" textLength="18" lengthAdjust="spacingAndGlyphs">#12</text>
<text x="7.5" y="221.5" font-size="9.5" textLength="18" lengthAdjust="spacingAndGlyphs">#12</text>
<text x="1151.5" y="118.3" font-size="9.5" font-family="Liberation Sans, Noto Sans CJK SC, sans-serif" textLength="53" lengthAdjust="spacingAndGlyphs">交易宝精英版</text>
</g>
<g shape-rendering="auto" fill="none" stroke="#fff" stroke-width="1"><circle cx="1212.5" cy="115" r="5.2"/><path d="M1209.8 116.5q2.7 3 5.4 0"/><path d="M1210.5 113.2v1M1214.5 113.2v1"/></g>
<path d="M4 112H11L7.500 116Z" fill="#fff" shape-rendering="crispEdges"/>
<path d="M972 105H984L978 111Z" fill="#a8b0c0" shape-rendering="auto"/>
<path d="M1 653.5L6.500 659H1Z" fill="#7f92b0" shape-rendering="auto"/>
<path d="M689.5 603.5v15l3.6-3.4 2.6 6 2.2-1-2.6-5.8h5z" fill="#fff" stroke="#000" stroke-width="0.8" shape-rendering="auto"/>
</svg>
<div id="panel">
<div class="phead"><span style="left:10px;top:7px;font-size:14px">-</span><span style="left:30px;top:6px">移</span><span style="left:120px;top:6px;font-size:13.3px">交易宝-精英版</span></div>
<span class="pm" style="top:36px">订单下单</span>
<div class="psel" style="top:60px"></div>
<span class="pm on" style="top:66px">订单平仓</span>
<span class="pm" style="top:96px">订单修改</span>
<span class="pm" style="top:126px">挂单功能</span>
<span class="pm" style="top:156px">网址导航</span>
<span class="pm" style="top:186px">联系我们</span>
<span class="pm" style="left:100px;top:36px">平仓模式</span>
<div class="psym">AUDUSD</div>
<div class="pb g" style="left:100px;top:65px;width:80px">多单平仓</div>
<div class="pb r" style="left:200px;top:65px;width:80px">空单平仓</div>
<div class="pb v" style="left:100px;top:105px;width:180px">全部平仓</div>
<div class="pb g" style="left:100px;top:145px;width:80px">盈利平仓</div>
<div class="pb r" style="left:200px;top:145px;width:80px">亏损平仓</div>
<span class="ps" style="left:100px;top:184px">盈利大于</span>
<div class="pin">100</div>
<span class="ps" style="left:177px;top:184px">美元平仓，当前<b>-10.50</b></span>
<div class="pb r" style="left:100px;top:210px;width:180px;font-weight:bold">盈利平仓&nbsp; 停用</div>
</div>
<div id="ctabs">
<span class="ct" style="left:13px">USDCAD,H1</span>
<span class="ct" style="left:104px">USDCHF,H1</span>
<span class="ct" style="left:192px">AUDCHF,M5</span>
<span class="ct" style="left:286px">USDCAD,M5</span>
<span class="ct" style="left:380px">GBPUSD,M5</span>
<span class="ct" style="left:472px">EURUSD,M5</span>
<span class="ct" style="left:565px">USDJPY,M5</span>
<i class="cs" style="left:94px"></i>
<i class="cs" style="left:182px"></i>
<i class="cs" style="left:274px"></i>
<i class="cs" style="left:368px"></i>
<i class="cs" style="left:462px"></i>
<i class="cs" style="left:554px"></i>
<div class="cact">AUDUSD,M5</div>
<svg style="position:absolute;left:1232px;top:3px" width="34" height="12" viewBox="0 0 34 12" ><path d="M6.500 6l4-3.500v7zM29 6l-4-3.500v7z" fill="#8a8a8a"/></svg>
</div>
<div id="term">
<div class="tstrip"><span class="tx">×</span><span class="vt">终端</span></div>
<div id="tbl">
<div class="tr th">
<span class="c" style="left:0px;width:98px;text-align:left;padding-left:6px">订单</span>
<span class="c" style="left:98px;width:138px">时间</span>
<span class="c" style="left:236px;width:69px">类型</span>
<span class="c" style="left:305px;width:53px">手数</span>
<span class="c" style="left:358px;width:68px;text-align:left;padding-left:11px">交易...<span style="position:absolute;left:55px;top:1px;font-size:8px;color:#555">⁄</span></span>
<span class="c" style="left:426px;width:77px">价格</span>
<span class="c" style="left:503px;width:76px">止损</span>
<span class="c" style="left:579px;width:76px">止盈</span>
<span class="c" style="left:655px;width:76px">价格</span>
<span class="c" style="left:731px;width:76px">手续费</span>
<span class="c" style="left:807px;width:76px">库存费</span>
<span class="c" style="left:883px;width:115px">获利</span>
<span class="c" style="left:998px;width:240px">注释</span>
</div>
<div class="tr sel" style="top:24px">
<span class="c" style="left:0px;width:98px;text-align:left;padding-left:22.5px;font-size:12.7px"><svg class="di" width="17" height="17" viewBox="0 0 17 17"><path d="M1.500 1.500h6.500l3.500 3.500v10.500h-10z" fill="#fff" stroke="#4a4a4a" stroke-width="1"/><path d="M8 1.500v3.500h3.500" fill="none" stroke="#4a4a4a" stroke-width="1"/><circle cx="11.800" cy="12.300" r="3.500" fill="#3a9cf0" stroke="#1a5fb4" stroke-width=".7"/><circle cx="10.800" cy="11.200" r="1.200" fill="#fff" fill-opacity=".55"/></svg>123549050</span>
<span class="c" style="left:98px;width:138px">2022.05.18 10:40:20</span>
<span class="c" style="left:236px;width:69px">buy</span>
<span class="c" style="left:305px;width:53px">0.10</span>
<span class="c" style="left:358px;width:68px">audusd</span>
<span class="c" style="left:426px;width:77px">0.70109</span>
<span class="c" style="left:503px;width:76px">0.00000</span>
<span class="c" style="left:579px;width:76px">0.00000</span>
<span class="c" style="left:655px;width:76px">0.70091</span>
<span class="c" style="left:731px;width:76px">0.00</span>
<span class="c" style="left:807px;width:76px">0.00</span>
<span class="c" style="left:883px;width:115px;padding-right:23px">-1.80<span class="cx">×</span></span>
<span class="c" style="left:998px;width:240px"></span>
</div>
<div class="tr alt" style="top:45px">
<span class="c" style="left:0px;width:98px;text-align:left;padding-left:22.5px;font-size:12.7px"><svg class="di" width="17" height="17" viewBox="0 0 17 17"><path d="M1.500 1.500h6.500l3.500 3.500v10.500h-10z" fill="#fff" stroke="#4a4a4a" stroke-width="1"/><path d="M8 1.500v3.500h3.500" fill="none" stroke="#4a4a4a" stroke-width="1"/><circle cx="11.800" cy="12.300" r="3.500" fill="#f03a2a" stroke="#b01010" stroke-width=".7"/><circle cx="10.800" cy="11.200" r="1.200" fill="#fff" fill-opacity=".55"/></svg>123549052</span>
<span class="c" style="left:98px;width:138px">2022.05.18 10:40:21</span>
<span class="c" style="left:236px;width:69px">sell</span>
<span class="c" style="left:305px;width:53px">0.10</span>
<span class="c" style="left:358px;width:68px">audusd</span>
<span class="c" style="left:426px;width:77px">0.70086</span>
<span class="c" style="left:503px;width:76px">0.00000</span>
<span class="c" style="left:579px;width:76px">0.00000</span>
<span class="c" style="left:655px;width:76px">0.70111</span>
<span class="c" style="left:731px;width:76px">0.00</span>
<span class="c" style="left:807px;width:76px">0.00</span>
<span class="c" style="left:883px;width:115px;padding-right:23px">-2.50<span class="cx">×</span></span>
<span class="c" style="left:998px;width:240px"></span>
</div>
<div class="tr" style="top:66px">
<span class="c" style="left:0px;width:98px;text-align:left;padding-left:22.5px;font-size:12.7px"><svg class="di" width="17" height="17" viewBox="0 0 17 17"><path d="M1.500 1.500h6.500l3.500 3.500v10.500h-10z" fill="#fff" stroke="#4a4a4a" stroke-width="1"/><path d="M8 1.500v3.500h3.500" fill="none" stroke="#4a4a4a" stroke-width="1"/><circle cx="11.800" cy="12.300" r="3.500" fill="#3a9cf0" stroke="#1a5fb4" stroke-width=".7"/><circle cx="10.800" cy="11.200" r="1.200" fill="#fff" fill-opacity=".55"/></svg>123549054</span>
<span class="c" style="left:98px;width:138px">2022.05.18 10:40:23</span>
<span class="c" style="left:236px;width:69px">buy</span>
<span class="c" style="left:305px;width:53px">0.10</span>
<span class="c" style="left:358px;width:68px">audusd</span>
<span class="c" style="left:426px;width:77px">0.70102</span>
<span class="c" style="left:503px;width:76px">0.00000</span>
<span class="c" style="left:579px;width:76px">0.00000</span>
<span class="c" style="left:655px;width:76px">0.70091</span>
<span class="c" style="left:731px;width:76px">0.00</span>
<span class="c" style="left:807px;width:76px">0.00</span>
<span class="c" style="left:883px;width:115px;padding-right:23px">-1.10<span class="cx">×</span></span>
<span class="c" style="left:998px;width:240px"></span>
</div>
<div class="tr alt" style="top:87px">
<span class="c" style="left:0px;width:98px;text-align:left;padding-left:22.5px;font-size:12.7px"><svg class="di" width="17" height="17" viewBox="0 0 17 17"><path d="M1.500 1.500h6.500l3.500 3.500v10.500h-10z" fill="#fff" stroke="#4a4a4a" stroke-width="1"/><path d="M8 1.500v3.500h3.500" fill="none" stroke="#4a4a4a" stroke-width="1"/><circle cx="11.800" cy="12.300" r="3.500" fill="#f03a2a" stroke="#b01010" stroke-width=".7"/><circle cx="10.800" cy="11.200" r="1.200" fill="#fff" fill-opacity=".55"/></svg>123549057</span>
<span class="c" style="left:98px;width:138px">2022.05.18 10:40:24</span>
<span class="c" style="left:236px;width:69px">sell</span>
<span class="c" style="left:305px;width:53px">0.10</span>
<span class="c" style="left:358px;width:68px">audusd</span>
<span class="c" style="left:426px;width:77px">0.70084</span>
<span class="c" style="left:503px;width:76px">0.00000</span>
<span class="c" style="left:579px;width:76px">0.00000</span>
<span class="c" style="left:655px;width:76px">0.70111</span>
<span class="c" style="left:731px;width:76px">0.00</span>
<span class="c" style="left:807px;width:76px">0.00</span>
<span class="c" style="left:883px;width:115px;padding-right:23px">-2.70<span class="cx">×</span></span>
<span class="c" style="left:998px;width:240px"></span>
</div>
<div class="tr" style="top:108px">
<span class="c" style="left:0px;width:98px;text-align:left;padding-left:22.5px;font-size:12.7px"><svg class="di" width="17" height="17" viewBox="0 0 17 17"><path d="M1.500 1.500h6.500l3.500 3.500v10.500h-10z" fill="#fff" stroke="#4a4a4a" stroke-width="1"/><path d="M8 1.500v3.500h3.500" fill="none" stroke="#4a4a4a" stroke-width="1"/><circle cx="11.800" cy="12.300" r="3.500" fill="#f03a2a" stroke="#b01010" stroke-width=".7"/><circle cx="10.800" cy="11.200" r="1.200" fill="#fff" fill-opacity=".55"/></svg>123549066</span>
<span class="c" style="left:98px;width:138px">2022.05.18 10:40:30</span>
<span class="c" style="left:236px;width:69px">sell</span>
<span class="c" style="left:305px;width:53px">0.10</span>
<span class="c" style="left:358px;width:68px">audusd</span>
<span class="c" style="left:426px;width:77px">0.70087</span>
<span class="c" style="left:503px;width:76px">0.00000</span>
<span class="c" style="left:579px;width:76px">0.00000</span>
<span class="c" style="left:655px;width:76px">0.70111</span>
<span class="c" style="left:731px;width:76px">0.00</span>
<span class="c" style="left:807px;width:76px">0.00</span>
<span class="c" style="left:883px;width:115px;padding-right:23px">-2.40<span class="cx">×</span></span>
<span class="c" style="left:998px;width:240px"></span>
</div>
<div class="tr alt" style="top:129px">
<span class="c" style="left:0px;width:98px;text-align:left;padding-left:22.5px;font-size:12.7px"><svg class="di" width="17" height="17" viewBox="0 0 17 17"><path d="M1.500 1.500h6.500l3.500 3.500v10.500h-10z" fill="#fff" stroke="#4a4a4a" stroke-width="1"/><path d="M8 1.500v3.500h3.500" fill="none" stroke="#4a4a4a" stroke-width="1"/><circle cx="11.800" cy="12.300" r="3.500" fill="#f03a2a" stroke="#b01010" stroke-width=".7"/><circle cx="10.800" cy="11.200" r="1.200" fill="#fff" fill-opacity=".55"/></svg>123470429</span>
<span class="c" style="left:98px;width:138px">2022.05.17 18:21:39</span>
<span class="c" style="left:236px;width:69px">sell</span>
<span class="c" style="left:305px;width:53px">1.00</span>
<span class="c" style="left:358px;width:68px">gbpusd</span>
<span class="c" style="left:426px;width:77px">1.24603</span>
<span class="c" style="left:503px;width:76px">0.00000</span>
<span class="c" style="left:579px;width:76px">0.00000</span>
<span class="c" style="left:655px;width:76px">1.24126</span>
<span class="c" style="left:731px;width:76px">0.00</span>
<span class="c" style="left:807px;width:76px">-3.63</span>
<span class="c" style="left:883px;width:115px;padding-right:23px">477.00<span class="cx">×</span></span>
<span class="c" style="left:998px;width:240px"></span>
</div>
</div>
<div class="sb"><div class="thumb"></div>
<svg style="position:absolute;left:3px;top:5px" width="12" height="8" viewBox="0 0 12 8" ><path d="M1.5 6l4.5-4.5 4.5 4.5" fill="none" stroke="#505050" stroke-width="1.6"/></svg>
<svg style="position:absolute;left:3px;top:128px" width="12" height="8" viewBox="0 0 12 8" ><path d="M1.5 1.500l4.5 4.5 4.5-4.5" fill="none" stroke="#505050" stroke-width="1.6"/></svg>
</div>
<div class="tline"></div>
<div class="btabs">
<div class="bact">交易</div>
<span class="bt" style="left:67px">展示</span>
<span class="bt" style="left:112px">账户历史</span>
<span class="bt" style="left:180px">新闻</span>
<span class="bt" style="left:224px">警报</span>
<span class="bt" style="left:268px">邮箱</span>
<span class="bt" style="left:312px">市场</span>
<span class="bt" style="left:376px">信号</span>
<span class="bt" style="left:420px">文章</span>
<span class="bt" style="left:464px">代码库</span>
<span class="bt" style="left:520px">EA</span>
<span class="bt" style="left:555.5px">日志</span>
<span class="bt" style="left:337px;top:10px;font:bold 10px 'Liberation Sans',sans-serif;color:#e8281c;letter-spacing:.2px">120</span>
<i class="bs" style="left:102px"></i>
<i class="bs" style="left:170px"></i>
<i class="bs" style="left:214px"></i>
<i class="bs" style="left:258px"></i>
<i class="bs" style="left:302px"></i>
<i class="bs" style="left:366px"></i>
<i class="bs" style="left:410px"></i>
<i class="bs" style="left:454px"></i>
<i class="bs" style="left:510px"></i>
<i class="bs" style="left:545px"></i>
<i class="bs" style="left:590px"></i>
</div>
</div>
<div id="status">
<span class="st" style="left:-1px;font-size:12px;letter-spacing:-.25px">寻求帮助,请按F1键</span>
<span class="st" style="left:462.5px">Default</span>
<span class="st" style="left:597.5px">2022.05.17 22:15</span>
<span class="st" style="left:714.5px">O: 0.70137</span>
<span class="st" style="left:796px">H: 0.70180</span>
<span class="st" style="left:877px">L: 0.70132</span>
<span class="st" style="left:955px">C: 0.70174</span>
<span class="st" style="left:1035px">V: 615</span>
<span class="st" style="left:1140.5px;letter-spacing:.4px">25341/24 kb</span>
<i class="ss" style="left:456px"></i>
<i class="ss" style="left:591px"></i>
<i class="ss" style="left:708px"></i>
<i class="ss" style="left:790px"></i>
<i class="ss" style="left:871px"></i>
<i class="ss" style="left:949px"></i>
<i class="ss" style="left:1029px"></i>
<i class="ss" style="left:1108px"></i>
<svg style="position:absolute;left:1113px;top:7px" width="24" height="13" viewBox="0 0 24 13" ><rect x="0.3" y="0" width="1.8" height="9.5" fill="#7a5a10"/><rect x="0.3" y="9.5" width="1.8" height="3.0" fill="#1a3f9a"/><rect x="2.9" y="0" width="1.8" height="8.6" fill="#7a5a10"/><rect x="2.9" y="8.6" width="1.8" height="3.9" fill="#1a3f9a"/><rect x="5.5" y="0" width="1.8" height="7.7" fill="#7a5a10"/><rect x="5.5" y="7.7" width="1.8" height="4.8" fill="#1a3f9a"/><rect x="8.1" y="0" width="1.8" height="6.8" fill="#7a5a10"/><rect x="8.1" y="6.8" width="1.8" height="5.7" fill="#1a3f9a"/><rect x="10.7" y="0" width="1.8" height="5.9" fill="#7a5a10"/><rect x="10.7" y="5.9" width="1.8" height="6.6" fill="#1a3f9a"/><rect x="13.3" y="0" width="1.8" height="5.0" fill="#7a5a10"/><rect x="13.3" y="5.0" width="1.8" height="7.5" fill="#1a3f9a"/><rect x="15.9" y="0" width="1.8" height="4.1" fill="#7a5a10"/><rect x="15.9" y="4.1" width="1.8" height="8.4" fill="#1a3f9a"/><rect x="18.5" y="0" width="1.8" height="3.2" fill="#7a5a10"/><rect x="18.5" y="3.2" width="1.8" height="9.3" fill="#1a3f9a"/><rect x="21.1" y="0" width="1.8" height="2.3" fill="#7a5a10"/><rect x="21.1" y="2.3" width="1.8" height="10.2" fill="#1a3f9a"/></svg>
<svg style="position:absolute;left:1255px;top:10px" width="14" height="14" viewBox="0 0 14 14" ><path d="M13 2L2 13M13 6L6 13M13 10l-3 3" stroke="#909090" stroke-width="1.2"/></svg>
</div>
</div>
</body></html>
